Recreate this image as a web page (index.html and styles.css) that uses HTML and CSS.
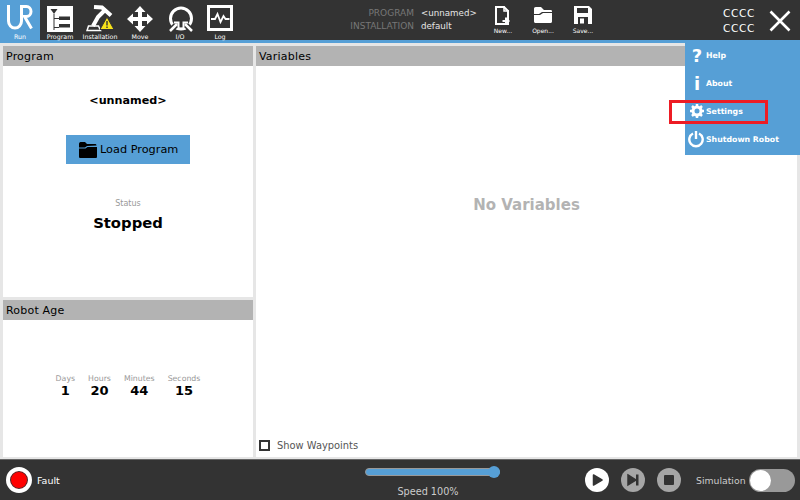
FILE: index.html
```html
<!DOCTYPE html>
<html lang="en">
<head>
    <meta charset="UTF-8">
    <title>Robot Run Screen</title>
    <link rel="stylesheet" href="styles.css">
</head>
<body>
    <div class="header">
        <div class="tab active">
            <svg class="tab-icon" width="34" height="30" viewBox="0 0 34 30">
                <path d="M5.500 1V17a6.500 7 0 0 0 13 0V2.500h5a4.500 5 0 0 1 0 10h-2l7 12" fill="none" stroke="#fff" stroke-width="3"/>
            </svg>
            <span>Run</span>
        </div>
        <div class="tab">
            <svg class="tab-icon" width="26" height="30" viewBox="0 0 26 30">
                <rect x="0" y="2" width="26" height="26" fill="#fff"/>
                <path d="M3.500 5h7l-3.500 5z" fill="#333"/>
                <path d="M7 10v16M7 14.500h5M7 23.500h5" stroke="#333" fill="none"/>
                <rect x="12" y="12.500" width="11" height="3.500" fill="#333"/>
                <rect x="12" y="20" width="11" height="3.500" fill="#333"/>
            </svg>
            <span>Program</span>
        </div>
        <div class="tab">
            <svg class="tab-icon" width="28" height="30" viewBox="0 0 28 30">
                <path d="M8 3l8 .5 9 8" fill="none" stroke="#fff" stroke-width="4"/>
                <path d="M18 7l-6 6-5 9" fill="none" stroke="#fff" stroke-width="4"/>
                <path d="M2.500 22h10l2 4.500H1z" fill="none" stroke="#fff" stroke-width="1.500"/>
                <path d="M21 13l7 12.500H14z" fill="#f7e21a" stroke="#333"/>
                <path d="M21 17v4.500M21 22.500v1.500" stroke="#333" stroke-width="1.400"/>
            </svg>
            <span>Installation</span>
        </div>
        <div class="tab">
            <svg class="tab-icon" width="26" height="30" viewBox="0 0 26 30">
                <path d="M13 2l5.500 6H15v5h5v-3.500l6 5.500-6 5.500V17h-5v5h3.500L13 28l-5.500-6H11v-5H6v3.500L0 15l6-5.500V13h5V8H7.500z" fill="#fff"/>
            </svg>
            <span>Move</span>
        </div>
        <div class="tab">
            <svg class="tab-icon" width="28" height="30" viewBox="0 0 28 30">
                <circle cx="15" cy="14.500" r="10.500" fill="none" stroke="#fff" stroke-width="3"/>
                <path d="M4 27l8-8M26 27l-8-8" stroke="#333" stroke-width="5.500" fill="none"/>
                <path d="M4 27l7-7M26 27l-7-7" stroke="#fff" stroke-width="2.500" fill="none"/>
                <path d="M8 18.500h4.500V23M22 18.500h-4.500V23" stroke="#fff" stroke-width="2" fill="none"/>
            </svg>
            <span>I/O</span>
        </div>
        <div class="tab">
            <svg class="tab-icon" width="28" height="30" viewBox="0 0 28 30">
                <rect x="2.500" y="2.500" width="23" height="23" fill="#333" stroke="#fff" stroke-width="3"/>
                <path d="M5 15h4l2.500-5 3 8 3-6 2 3h4" fill="none" stroke="#fff" stroke-width="1.800"/>
            </svg>
            <span>Log</span>
        </div>

        <div class="file-info">
            <div class="file-labels">
                <span>PROGRAM</span>
                <span>INSTALLATION</span>
            </div>
            <div class="file-names">
                <span>&lt;unnamed&gt;</span>
                <span>default</span>
            </div>
        </div>

        <div class="file-buttons">
            <div class="file-btn">
                <svg width="20" height="24" viewBox="0 0 20 24">
                    <path d="M3 4h8l4 4v13H3z" fill="none" stroke="#fff" stroke-width="2"/>
                    <path d="M11 3v5h5" fill="none" stroke="#fff" stroke-width="1.500"/>
                    <path d="M13 14.500v7M9.500 18h7" stroke="#fff" stroke-width="2"/>
                </svg>
                <span>New...</span>
            </div>
            <div class="file-btn">
                <svg width="20" height="24" viewBox="0 0 20 24">
                    <path d="M1 6c0-1 0-2 2-2h5l3 3h7c1 0 1 1 1 2H9L6 11H1zM1 12h6l3-2h9v8.500c0 1-1 1.500-2 1.500H3c-1 0-2-.5-2-1.500z" fill="#fff"/>
                </svg>
                <span>Open...</span>
            </div>
            <div class="file-btn">
                <svg width="20" height="24" viewBox="0 0 20 24">
                    <path d="M1 3h15l3 3v15H1z" fill="#fff"/>
                    <rect x="4" y="5" width="11" height="5" fill="#333"/>
                    <rect x="5" y="14" width="10" height="7" fill="#333"/>
                    <rect x="7" y="15.500" width="4" height="5" fill="#fff"/>
                </svg>
                <span>Save...</span>
            </div>
        </div>

        <div class="robot-name">
            <span>CCCC</span>
            <span>CCCC</span>
        </div>
        <svg class="close-icon" width="26" height="26" viewBox="0 0 26 26">
            <path d="M3.500 3.500l19 19M22.500 3.500l-19 19" stroke="#fff" stroke-width="2.600"/>
        </svg>
    </div>

    <div class="main">
        <div class="col-left">
            <div class="panel panel-program">
                <div class="panel-title">Program</div>
                <div class="program-body">
                    <div class="program-name">&lt;unnamed&gt;</div>
                    <div class="load-btn">
                        <svg width="18" height="16" viewBox="0 0 18 16">
                            <path d="M0 2c0-1 .5-2 1.500-2H6l2 2h8c1 0 1.500.5 1.500 1.500L8 4 6 5.500H0zM0 6.500h6.500L8.500 5H18v9.500c0 1-.5 1.500-1.500 1.500h-15C.5 16 0 15.500 0 14.500z" fill="#000"/>
                        </svg>
                        <span>Load Program</span>
                    </div>
                    <div class="status-label">Status</div>
                    <div class="status-value">Stopped</div>
                </div>
            </div>
            <div class="panel panel-age">
                <div class="panel-title">Robot Age</div>
                <div class="age-body">
                    <div class="age-item"><span>Days</span><b>1</b></div>
                    <div class="age-item"><span>Hours</span><b>20</b></div>
                    <div class="age-item"><span>Minutes</span><b>44</b></div>
                    <div class="age-item"><span>Seconds</span><b>15</b></div>
                </div>
            </div>
        </div>
        <div class="panel panel-vars">
            <div class="panel-title">Variables</div>
            <div class="vars-body">No Variables</div>
            <label class="waypoints"><span class="checkbox"></span>Show Waypoints</label>
        </div>
    </div>

    <div class="footer">
        <div class="fault">
            <span class="fault-dot"></span>
            <span>Fault</span>
        </div>
        <div class="speed">
            <div class="speed-track"><span class="speed-knob"></span></div>
            <div class="speed-label">Speed 100%</div>
        </div>
        <div class="controls">
            <svg width="24" height="24" viewBox="0 0 24 24">
                <circle cx="12" cy="12" r="12" fill="#fff"/>
                <path d="M8.500 7l8.500 5-8.500 5z" fill="#333" stroke="#333" stroke-width="1.500" stroke-linejoin="round"/>
            </svg>
            <svg width="24" height="24" viewBox="0 0 24 24">
                <circle cx="12" cy="12" r="12" fill="#a6a6a6"/>
                <path d="M7 7l8 5-8 5z" fill="#333" stroke="#333" stroke-width="1.500"/>
                <rect x="15" y="6.500" width="2.500" height="11" fill="#333"/>
            </svg>
            <svg width="24" height="24" viewBox="0 0 24 24">
                <circle cx="12" cy="12" r="12" fill="#a6a6a6"/>
                <rect x="7" y="7" width="10" height="10" rx="1" fill="#333"/>
            </svg>
        </div>
        <div class="simulation">
            <span>Simulation</span>
            <span class="switch"><span class="switch-knob"></span></span>
        </div>
    </div>

    <!-- dropdown opened from the burger / close button -->
    <div class="menu">
        <div class="menu-item">
            <span class="menu-icon glyph">?</span>
            <span>Help</span>
        </div>
        <div class="menu-item">
            <span class="menu-icon glyph">i</span>
            <span>About</span>
        </div>
        <div class="menu-item">
            <svg class="menu-icon" width="18" height="16" viewBox="0 0 18 16">
                <circle cx="9" cy="8" r="4" fill="none" stroke="#fff" stroke-width="3"/>
                <path d="M9 1v2.500M9 12.500V15M2 8h2.500M13.500 8H16M4 3l1.800 1.800M12.200 11.200L14 13M14 3l-1.800 1.800M5.800 11.200L4 13" stroke="#fff" stroke-width="2.500"/>
            </svg>
            <span>Settings</span>
        </div>
        <div class="menu-item">
            <svg class="menu-icon" width="18" height="18" viewBox="0 0 18 18">
                <path d="M5 3.500a6.700 6.700 0 1 0 6 0" fill="none" stroke="#fff" stroke-width="2.400"/>
                <path d="M8 1v8" stroke="#fff" stroke-width="2.400"/>
            </svg>
            <span>Shutdown Robot</span>
        </div>
    </div>
    <div class="highlight"></div>
</body>
</html>
```

FILE: styles.css
```css
* {
    box-sizing: border-box;
}
html, body {
    height: 100%;
}
body {
    margin: 0;
    width: 800px;
    height: 500px;
    overflow: hidden;
    display: flex;
    flex-direction: column;
    position: relative;
    font-family: "DejaVu Sans", sans-serif;
    background-color: #e6e6e6;
    color: #000;
}

/* Top bar */
.header {
    height: 43px;
    display: flex;
    background-color: #333;
    border-bottom: 3px solid #569fd6;
    color: #fff;
}
.tab {
    width: 40px;
    height: 40px;
    display: flex;
    flex-direction: column;
    align-items: center;
    font-size: 6.300px;
    white-space: nowrap;
}
.tab.active {
    background-color: #569fd6;
}
.tab-icon {
    margin-top: 4px;
    height: 30px;
    flex-shrink: 0;
}
.tab span {
    line-height: 6px;
}
.file-info {
    width: 120px;
    margin-left: 114px;
    display: flex;
    gap: 7px;
    padding-top: 7px;
    font-size: 9px;
    line-height: 12.500px;
}
.file-labels, .file-names, .robot-name {
    display: flex;
    flex-direction: column;
}
.file-labels {
    width: 60px;
    align-items: flex-end;
    white-space: nowrap;
    color: #777;
}
.file-names {
    color: #e6e6e6;
    font-size: 8.700px;
}
.file-buttons {
    display: flex;
    margin-left: 9px;
}
.file-btn {
    width: 40px;
    display: flex;
    flex-direction: column;
    align-items: center;
    padding-top: 3px;
    font-size: 6px;
    line-height: 8px;
}
.robot-name {
    margin-left: 120px;
    padding-top: 6px;
    font-size: 10.500px;
    line-height: 15px;
    letter-spacing: 0.700px;
}
.close-icon {
    margin: 8px 0 0 12px;
}

/* Main content */
.main {
    height: 416px;
    display: flex;
    gap: 3px;
    padding: 3px 3px 2px;
}
.col-left {
    width: 250px;
    display: flex;
    flex-direction: column;
    gap: 3px;
}
.panel {
    background-color: #fff;
    display: flex;
    flex-direction: column;
}
.panel-program {
    height: 251px;
}
.panel-age {
    flex: 1;
}
.panel-vars {
    flex: 1;
}
.panel-title {
    height: 20px;
    padding-left: 3px;
    background-color: #b3b3b3;
    font-size: 11px;
    line-height: 22px;
    letter-spacing: 0.200px;
}
.program-body {
    display: flex;
    flex-direction: column;
    align-items: center;
}
.program-name {
    margin-top: 28px;
    font-size: 11.200px;
    font-weight: bold;
    line-height: 14px;
}
.load-btn {
    width: 124px;
    height: 29px;
    margin-top: 27px;
    display: flex;
    align-items: center;
    gap: 3px;
    padding-left: 13px;
    background-color: #569fd6;
    font-size: 11.300px;
}
.status-label {
    margin-top: 35px;
    font-size: 8px;
    line-height: 10px;
    color: #999;
}
.status-value {
    margin-top: 5px;
    font-size: 14.800px;
    font-weight: bold;
    line-height: 18px;
}
.age-body {
    display: flex;
    justify-content: center;
    gap: 13px;
    padding-top: 54px;
}
.age-item {
    display: flex;
    flex-direction: column;
    align-items: center;
    font-size: 7.800px;
    line-height: 10px;
    color: #999;
}
.age-item b {
    margin-top: 1px;
    font-size: 13px;
    line-height: 12px;
    color: #000;
}
.vars-body {
    flex: 1;
    padding-top: 130px;
    text-align: center;
    font-size: 15px;
    font-weight: bold;
    color: #b3b3b3;
}
.waypoints {
    height: 24px;
    display: flex;
    align-items: center;
    gap: 7px;
    padding: 1px 0 0 3px;
    font-size: 9.900px;
    color: #555;
}
.checkbox {
    width: 11px;
    height: 11px;
    border: 2px solid #333;
}

/* Bottom bar */
.footer {
    flex: 1;
    display: flex;
    align-items: center;
    background-color: #333;
    border-top: 1px solid #666;
    color: #fff;
}
.fault {
    width: 364px;
    display: flex;
    align-items: center;
    gap: 5px;
    padding-left: 6px;
    font-size: 9.500px;
}
.fault-dot {
    width: 26px;
    height: 26px;
    border: 4px solid #fff;
    border-radius: 50%;
    background-color: #f00;
    box-shadow: inset 0 0 0 1px #333;
}
.speed {
    width: 136px;
    margin-left: 1px;
    padding-top: 4px;
    color: #ccc;
    font-size: 9.700px;
}
.speed-track {
    width: 135px;
    height: 8px;
    position: relative;
    margin-bottom: 10px;
    background-color: #569fd6;
    border: 1px solid #999;
    border-radius: 4px;
}
.speed-knob {
    position: absolute;
    right: -1px;
    top: -3px;
    width: 12px;
    height: 12px;
    border-radius: 50%;
    background-color: #569fd6;
}
.speed-label {
    padding-right: 10px;
    text-align: center;
}
.controls {
    display: flex;
    gap: 12px;
    margin-left: 84px;
}
.simulation {
    display: flex;
    align-items: center;
    gap: 3px;
    margin-left: 15px;
    color: #ccc;
    font-size: 9.300px;
}
.switch {
    width: 46px;
    height: 23px;
    display: block;
    border-radius: 12px;
    background-color: #999;
}
.switch-knob {
    display: block;
    width: 21px;
    height: 21px;
    margin: 1px;
    border-radius: 50%;
    background-color: #fff;
}

/* Dropdown menu */
.menu {
    position: absolute;
    top: 43px;
    right: 0;
    width: 115px;
    height: 112px;
    background-color: #569fd6;
    color: #fff;
    font-size: 7.800px;
    font-weight: bold;
}
.menu-item {
    height: 28px;
    display: flex;
    align-items: center;
    padding: 0 0 4px 3px;
}
.menu-item .menu-icon {
    width: 18px;
    flex-shrink: 0;
}
.glyph {
    font-size: 18px;
    text-align: center;
}
.highlight {
    position: absolute;
    left: 669px;
    top: 100px;
    width: 99px;
    height: 24px;
    border: 3px solid #ed1c24;
}
```
